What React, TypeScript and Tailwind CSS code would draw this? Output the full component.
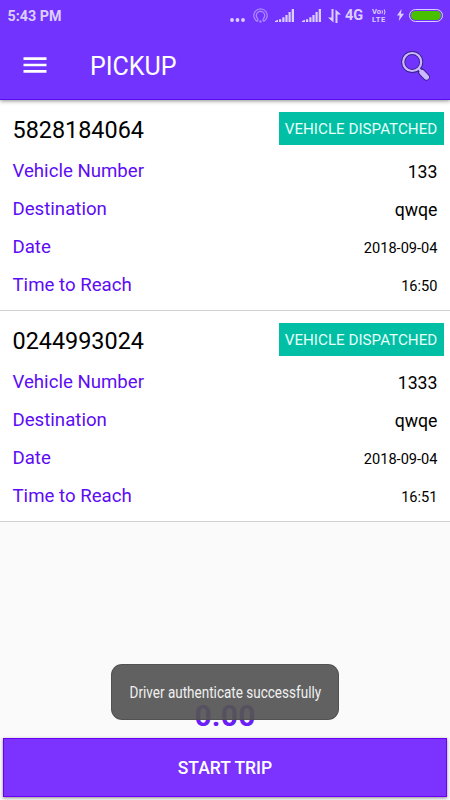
interface Trip {
  phone: string;
  status: string;
  vehicle: string;
  destination: string;
  date: string;
  time: string;
}

const TRIPS: Trip[] = [
  { phone: '5828184064', status: 'VEHICLE DISPATCHED', vehicle: '133', destination: 'qwqe', date: '2018-09-04', time: '16:50' },
  { phone: '0244993024', status: 'VEHICLE DISPATCHED', vehicle: '1333', destination: 'qwqe', date: '2018-09-04', time: '16:51' },
];

function SignalIcon() {
  return (
    <svg className="w-[19px] h-[13px]" viewBox="0 0 19 13" fill="currentColor" aria-hidden="true">
      <path d="M0 13v-1l3-1.300V13zM4 10.300h2.200V13H4zM7.300 8.300h2.200V13H7.300zM10.400 6h2.200v7h-2.200zM13.500 3h2.200v10h-2.200zM16.700 0H19v13h-2.300z" />
    </svg>
  );
}

function StatusBar() {
  return (
    <div className="h-8 flex items-center justify-between pl-[7.500px] pr-[7px] text-[#dccfff]">
      <span className="text-[14.300px] font-bold leading-none">5:43 PM</span>
      <div className="flex items-center">
        <svg className="w-[15px] h-[4px] mt-[7px]" viewBox="0 0 15 4" fill="currentColor" aria-hidden="true">
          <circle cx="2" cy="2" r="1.900" />
          <circle cx="7.500" cy="2" r="1.900" />
          <circle cx="13" cy="2" r="1.900" />
        </svg>
        <svg className="w-[15px] h-[15px] ml-2 -mt-[2px] text-[#ab88ff]" viewBox="0 0 15 15" fill="none" stroke="currentColor" strokeWidth="1.300" aria-hidden="true">
          <path d="M4.500 13.500a6.700 6.700 0 1 1 6 0" />
          <path d="M5 10.800a4.200 4.200 0 1 1 5 0" />
          <path d="M5 10.800 4.500 13.500M10 10.800l.5 2.700" />
          <circle cx="7.500" cy="13.500" r=".6" />
        </svg>
        <span className="ml-[7px] -mt-px"><SignalIcon /></span>
        <span className="ml-2 -mt-px"><SignalIcon /></span>
        <svg className="w-[13px] h-[14px] ml-[7px] -mt-px" viewBox="0 0 13 14" fill="currentColor" aria-hidden="true">
          <path d="M3.500 0h2v13.500L0 8.500h3.500zM7.500 14V.5L13 5.500H9.500V14z" />
        </svg>
        <span className="ml-[4px] w-[18px] text-[14.500px] font-bold leading-none">4G</span>
        <span className="ml-[9px] w-[15px] flex flex-col text-[7.600px] font-bold leading-[8px]">
          <span className="flex items-center whitespace-nowrap">
            Vo
            <svg className="w-[5px] h-[6px]" viewBox="0 0 5 6" fill="none" stroke="currentColor" strokeWidth="1" aria-hidden="true">
              <path d="M1 1.300q1 1.700 0 3.400M3.200.4q1.600 2.600 0 5.200" />
            </svg>
          </span>
          <span className="tracking-[0.500px]">LTE</span>
        </span>
        <svg className="w-[7px] h-[12px] ml-[10px] -mt-[2px]" viewBox="0 0 7 12" fill="currentColor" aria-hidden="true">
          <path d="M4.500 0 0 6.600h2.700L1.800 12 7 4.800H4z" />
        </svg>
        <span className="ml-[5px] -mt-[2px] w-[34px] h-[13px] rounded-full border-[1.500px] border-[#dccfff] p-[1px] flex">
          <span className="flex-1 rounded-full bg-[#48c000]" />
        </span>
      </div>
    </div>
  );
}

function MenuIcon() {
  return (
    <svg className="w-6 h-4" viewBox="0 0 24 16" fill="white" aria-hidden="true">
      <path d="M.5.300h23v2.700H.5zM.5 6.700h23v2.600H.5zM.5 13.100h23v2.700H.5z" />
    </svg>
  );
}

function SearchIcon() {
  return (
    <svg className="w-[30px] h-[30px]" viewBox="0 0 30 30" fill="none" aria-hidden="true">
      <path d="M20.500 21 25.300 26" stroke="#39208a" strokeWidth="7" strokeLinecap="round" />
      <circle cx="11.200" cy="11" r="9" stroke="#39208a" strokeWidth="4" />
      <path d="M17 17 20 20" stroke="#cdb8ff" strokeWidth="2.200" />
      <path d="M21 21.500 25.300 26" stroke="#cdb8ff" strokeWidth="5.400" strokeLinecap="round" />
      <circle cx="11.200" cy="11" r="9" stroke="#cdb8ff" strokeWidth="2.200" />
    </svg>
  );
}

function TripCard({ trip }: { trip: Trip }) {
  // Date and time are set a size smaller than the other values
  const rows = [
    { label: 'Vehicle Number', value: trip.vehicle, small: false },
    { label: 'Destination', value: trip.destination, small: false },
    { label: 'Date', value: trip.date, small: true },
    { label: 'Time to Reach', value: trip.time, small: true },
  ];

  return (
    <li className="h-[211px] bg-white border-b border-[#d0d0d0] pt-3 pl-[12.500px]">
      <div className="h-[33px] flex items-center justify-between pr-[6.500px]">
        <h2 className="text-[23.400px] leading-none text-black pt-[4px]">{trip.phone}</h2>
        <span className="w-[165px] h-[33px] pt-[2px] bg-[#00bfa5] text-[#e6fffa] text-[15.200px] whitespace-nowrap flex items-center justify-center">
          {trip.status}
        </span>
      </div>
      <dl className="pt-[8px] pr-[12.500px]">
        {rows.map((row) => (
          <div key={row.label} className="h-[38px] flex items-center justify-between">
            <dt className="text-[18.650px] text-[#5d0cf5]">{row.label}</dt>
            <dd className={`text-black ${row.small ? 'pt-[2px] text-[14.600px]' : 'text-[17.700px]'}`}>{row.value}</dd>
          </div>
        ))}
      </dl>
    </li>
  );
}

export default function App() {
  return (
    <div className="relative w-[450px] h-[800px] flex flex-col overflow-hidden bg-[#fafafa] font-['Roboto',sans-serif]">
      <header className="relative z-10 h-[100px] shrink-0 bg-[#7233ff] border-b border-[#5a0cf0] shadow-[0_1px_4px_rgba(0,0,0,0.45)]">
        <StatusBar />
        <div className="h-[66px] flex items-center pl-[23px] pr-[19.500px]">
          <button aria-label="Menu">
            <MenuIcon />
          </button>
          <h1 className="ml-[43px] flex-1 text-[25px] leading-none text-white pt-[3px]">PICKUP</h1>
          <button className="pt-px" aria-label="Search">
            <SearchIcon />
          </button>
        </div>
      </header>

      <ul>
        {TRIPS.map((trip) => (
          <TripCard key={trip.phone} trip={trip} />
        ))}
      </ul>

      <footer className="mt-auto flex flex-col items-center px-[3px] pb-[3px]">
        <span className="text-[30px] leading-none font-bold text-[#6a1ff5] tracking-[0.200px] mb-[7px]">0.00</span>
        <button className="w-full h-[59px] pt-[2px] bg-[#7c33ff] border border-[#6a00f5] text-white text-[17.500px] font-medium shadow-[0_1px_3px_rgba(0,0,0,0.45)]">
          START TRIP
        </button>
      </footer>

      <div className="absolute left-[111px] top-[664px] w-[228px] h-[56px] pt-px rounded-[11px] bg-[#555555]/93 border border-[#4a4a4a]/60 flex items-center justify-center">
        <span className="text-[16px] text-[#f0f0f0] whitespace-nowrap scale-x-[0.845]">
          Driver authenticate successfully
        </span>
      </div>
    </div>
  );
}
